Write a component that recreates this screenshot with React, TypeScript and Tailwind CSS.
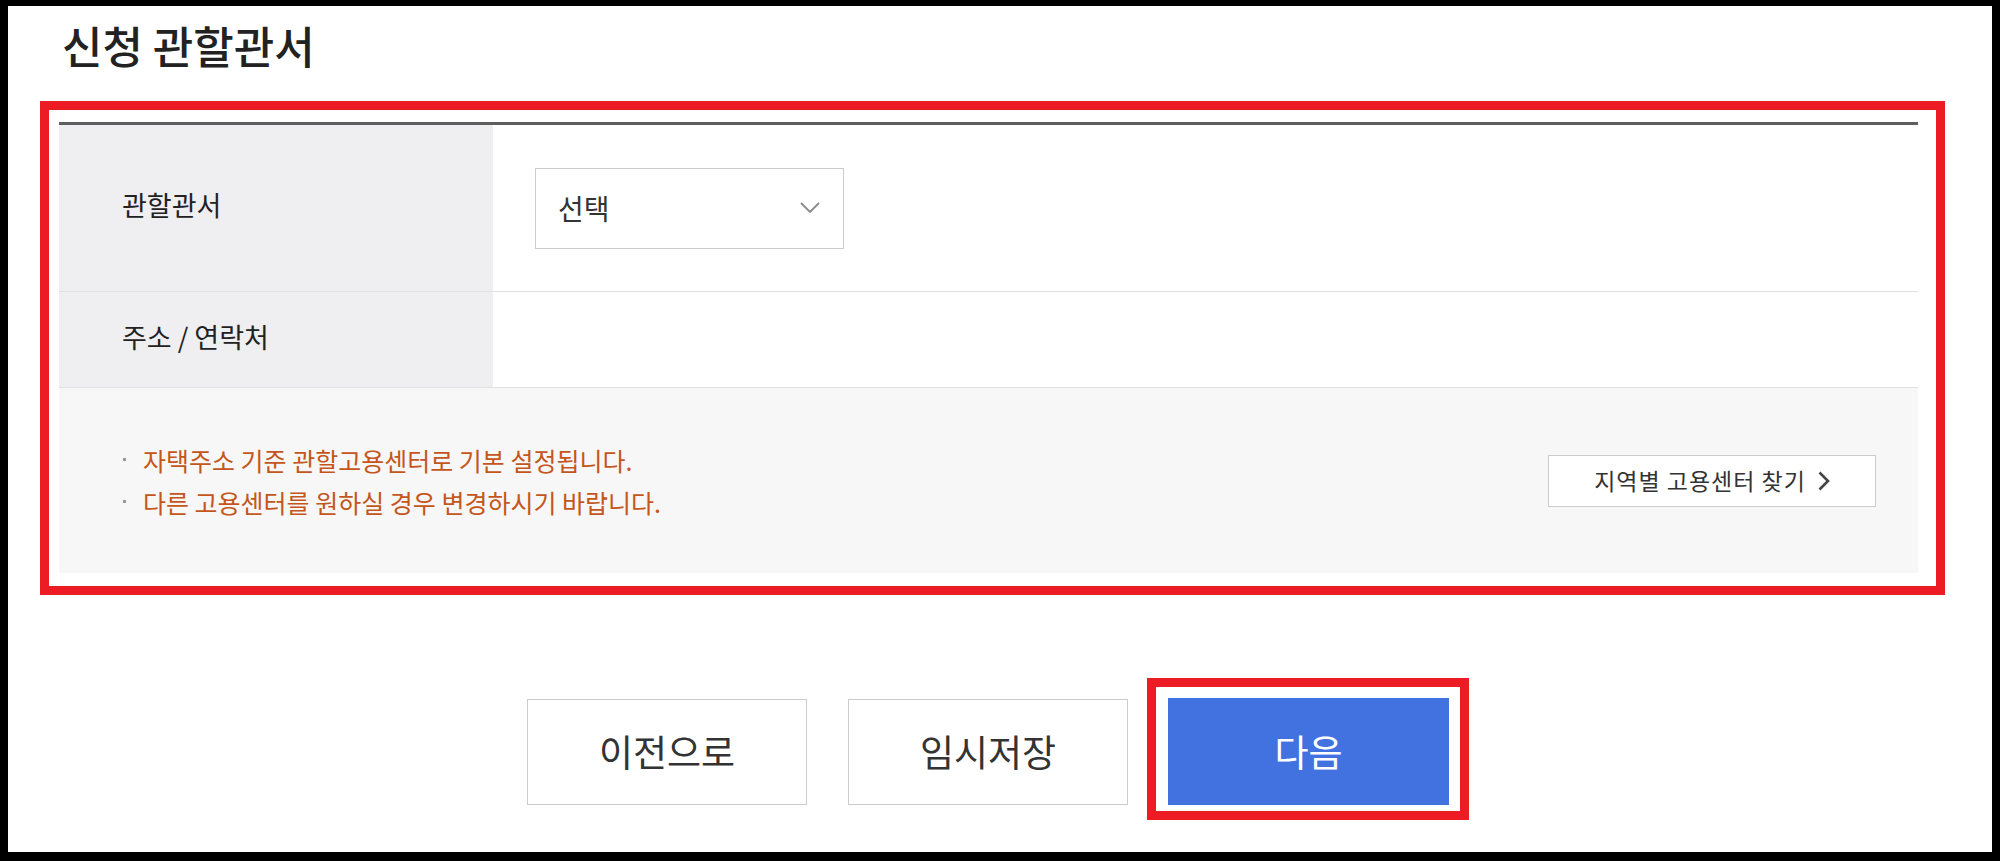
export default function App() {
  return (
    <div className="w-[2000px] h-[861px] bg-black pt-[6px] px-[8px] pb-[9px] font-['Noto_Sans_CJK_KR','Noto_Sans_CJK_SC',sans-serif]">
      <div className="h-full bg-white flex flex-col">
        <h1 className="mt-[14px] ml-[54px] text-[44px] leading-[50px] text-[#222] font-medium">
          신청 관할관서
        </h1>

        <div className="mt-[31px] ml-[32px] w-[1905px] border-[9px] border-[#ed1c24] pt-[12px] pl-[10px] pr-[18px] pb-[13px]">
          <div className="border-t-[3px] border-[#5e5e5e]">
            {/* Row 1 */}
            <div className="flex h-[167px] border-b border-[#e1e1e1]">
              <div className="w-[434px] shrink-0 bg-[#efeff2] flex items-center pl-[63px] pb-[6px] text-[27px] text-[#222]">
                관할관서
              </div>
              <div className="flex-1 flex items-center pl-[42px]">
                <div className="w-[309px] h-[81px] border border-[#cccccc] flex items-center justify-between pl-[22px] pr-[23px] bg-white">
                  <span className="text-[28px] text-[#333]">선택</span>
                  <svg width="20" height="12" viewBox="0 0 20 12" fill="none">
                    <polyline points="1,1 10,10 19,1" stroke="#8a8a8a" strokeWidth="1.8" />
                  </svg>
                </div>
              </div>
            </div>

            {/* Row 2 */}
            <div className="flex h-[96px] border-b border-[#e1e1e1]">
              <div className="w-[434px] shrink-0 bg-[#efeff2] flex items-center pl-[63px] pb-[4px] text-[27px] text-[#222]">
                주소 / 연락처
              </div>
              <div className="flex-1" />
            </div>

            {/* Notice */}
            <div className="h-[185px] bg-[#f7f7f7] flex items-center justify-between pl-[64px] pr-[42px]">
              <ul className="text-[25px] leading-[42px] text-[#c4561b]">
                <li className="flex items-center">
                  <span className="w-[3px] h-[3px] bg-[#9a9a9a] mr-[17px]" />
                  자택주소 기준 관할고용센터로 기본 설정됩니다.
                </li>
                <li className="flex items-center">
                  <span className="w-[3px] h-[3px] bg-[#9a9a9a] mr-[17px]" />
                  다른 고용센터를 원하실 경우 변경하시기 바랍니다.
                </li>
              </ul>
              <button className="w-[328px] h-[52px] border border-[#cccccc] bg-white flex items-center justify-center gap-[12px] text-[23px] tracking-[1px] text-[#333]">
                <span>지역별 고용센터 찾기</span>
                <svg width="12" height="20" viewBox="0 0 12 20" fill="none">
                  <polyline points="1.5,1.5 10,10 1.5,18.5" stroke="#444" strokeWidth="2.6" />
                </svg>
              </button>
            </div>
          </div>
        </div>

        {/* Buttons */}
        <div className="mt-[83px] flex items-start justify-center pr-[4px]">
          <button className="mt-[21px] w-[280px] h-[106px] border border-[#cccccc] bg-white flex items-center justify-center text-[37px] text-[#333]">
            이전으로
          </button>
          <button className="ml-[41px] mt-[21px] w-[280px] h-[106px] border border-[#cccccc] bg-white flex items-center justify-center text-[37px] text-[#333]">
            임시저장
          </button>
          <div className="ml-[19px] border-[9px] border-[#ed1c24] pt-[11px] pl-[12px] pr-[11px] pb-[6px]">
            <button className="w-[281px] h-[107px] bg-[#4272e0] flex items-center justify-center text-[37px] text-white">
              다음
            </button>
          </div>
        </div>
      </div>
    </div>
  );
}
